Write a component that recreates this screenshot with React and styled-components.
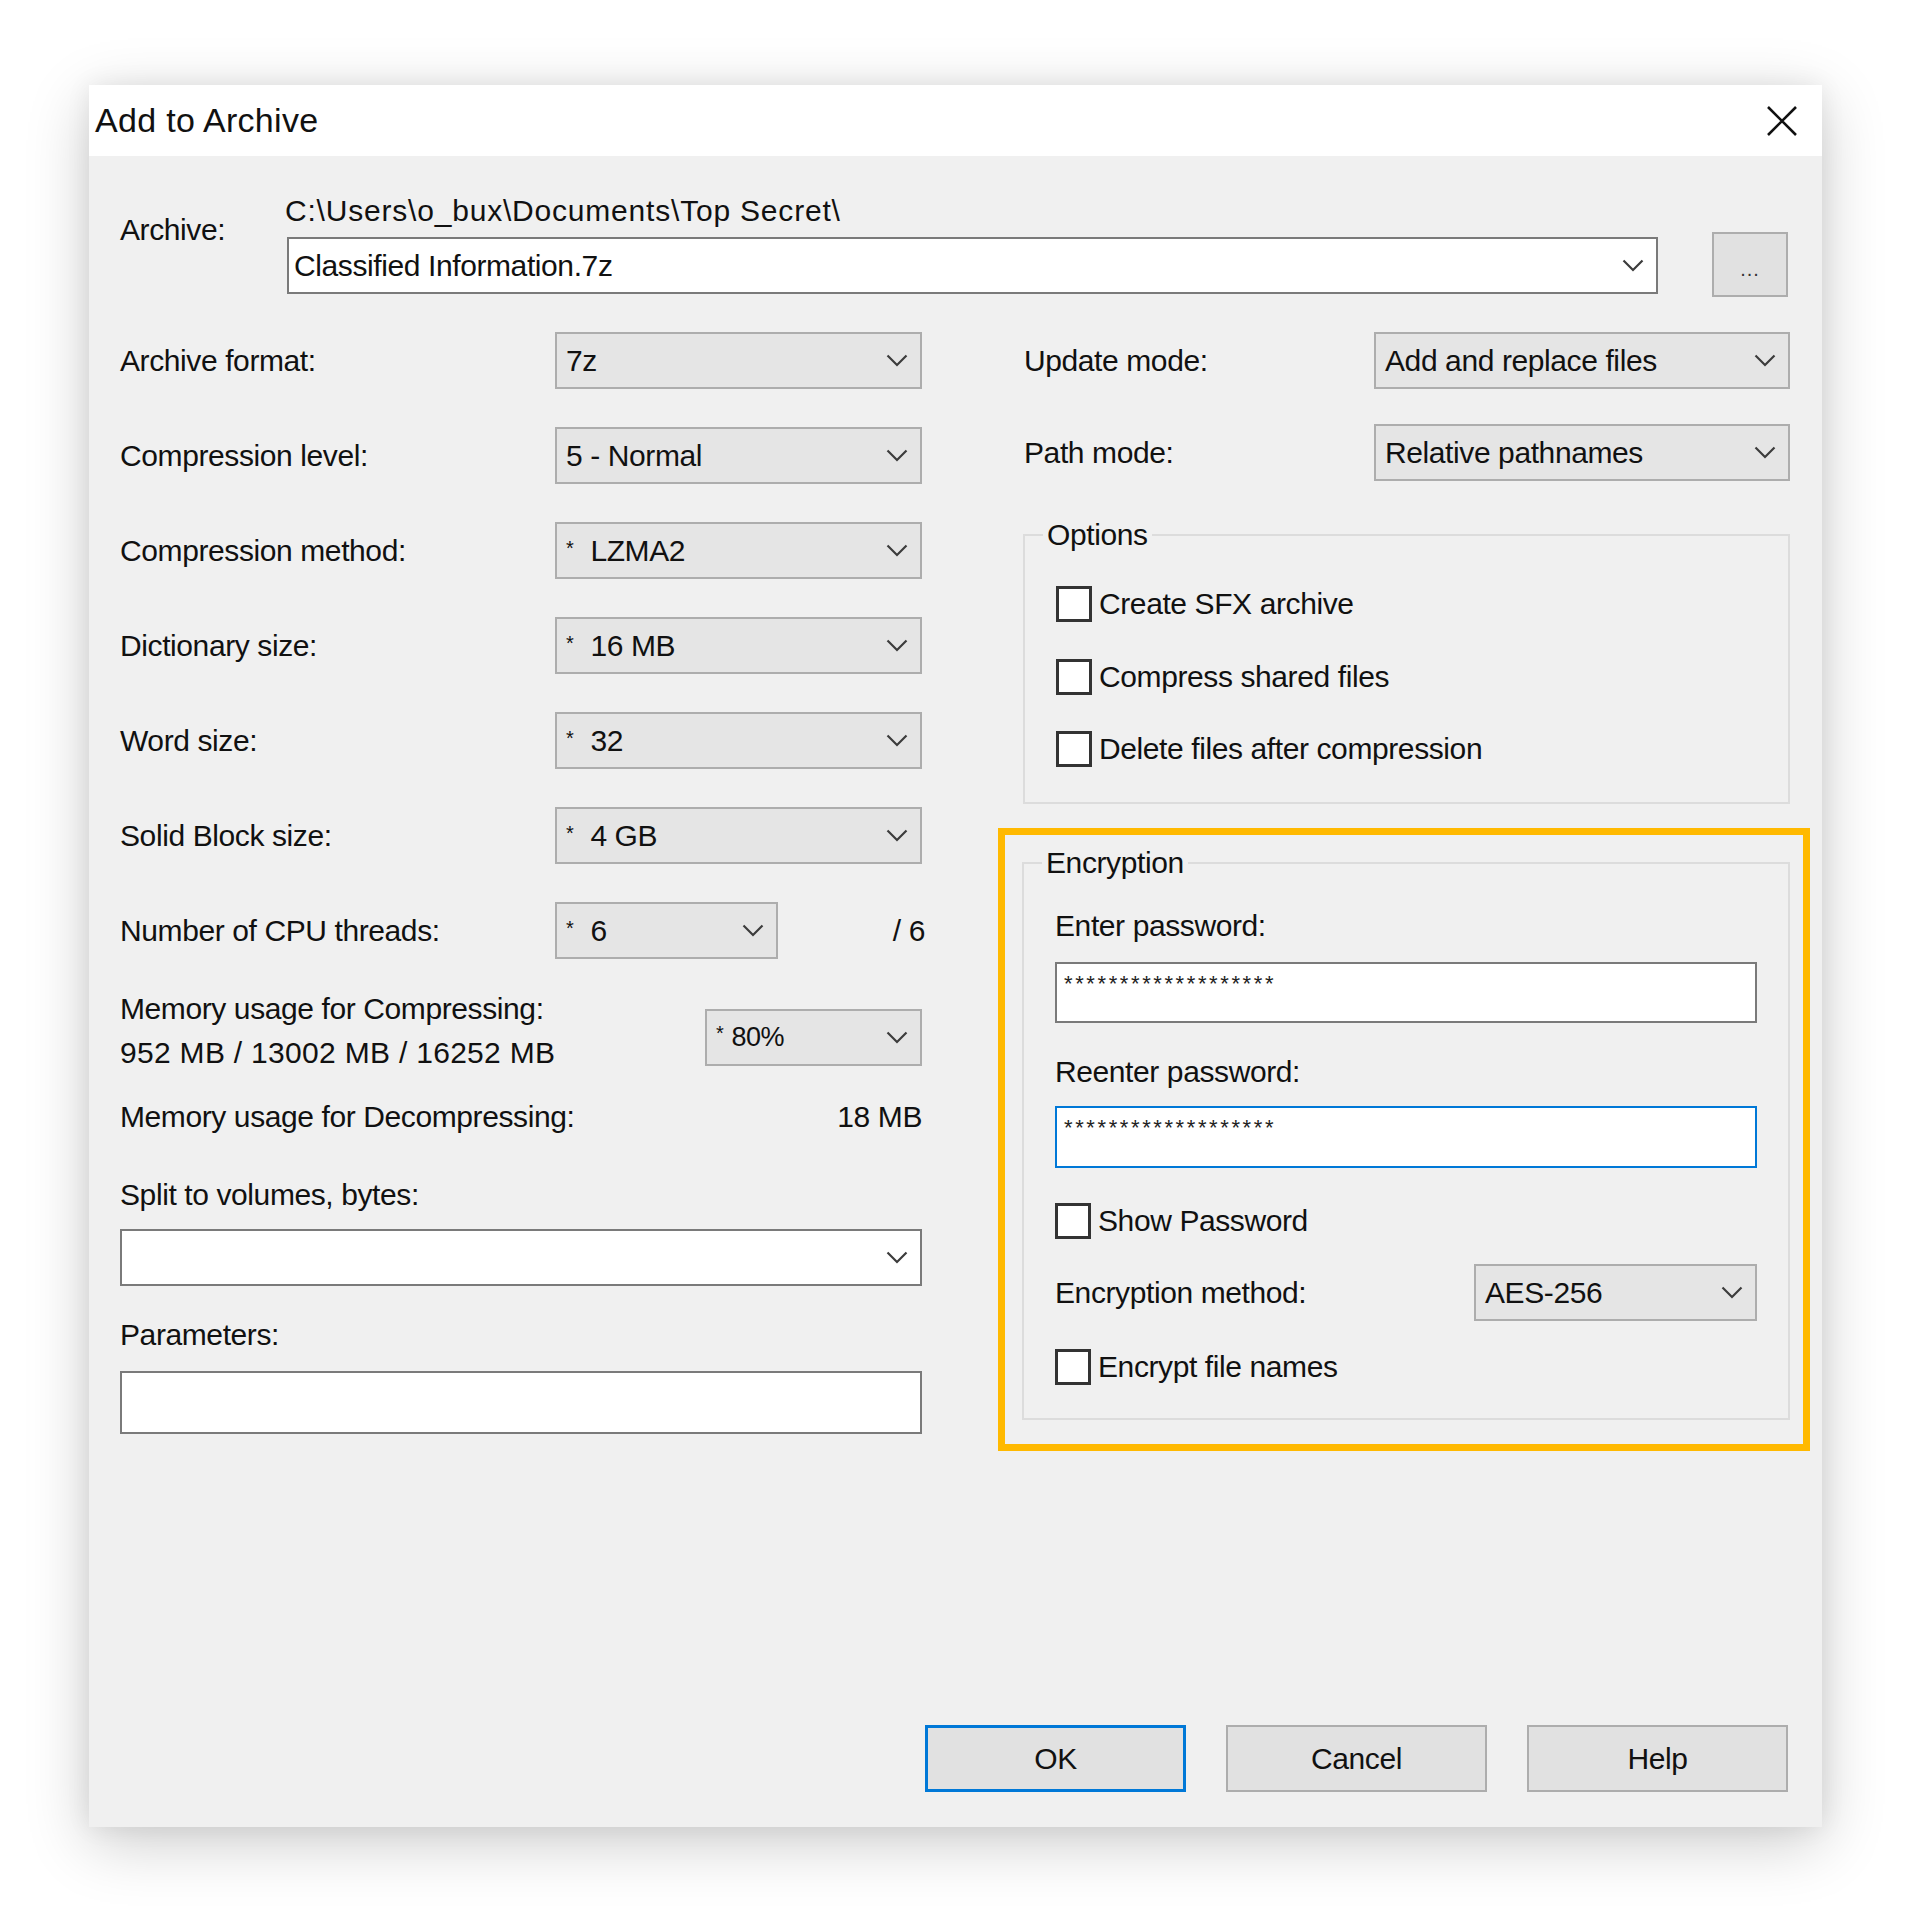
import React from 'react';
import styled, { createGlobalStyle } from 'styled-components';

const Global = createGlobalStyle`
  html, body { margin: 0; padding: 0; background: #ffffff; }
  body { font-family: "Liberation Sans", Arial, sans-serif; }
  *, *::before, *::after { box-sizing: border-box; }
`;

const Page = styled.div`
  width: 1920px;
  height: 1920px;
  padding: 85px 0 0 89px;
  background: #ffffff;
`;

const Dialog = styled.div`
  width: 1733px;
  height: 1742px;
  display: flex;
  flex-direction: column;
  background: #f0f0f0;
  box-shadow: 0 16px 60px rgba(0, 0, 0, 0.2), 0 0 24px rgba(0, 0, 0, 0.07);
  font-size: 30px;
  letter-spacing: -0.4px;
  color: #111;
`;

const TitleBar = styled.div`
  height: 71px;
  flex: none;
  background: #ffffff;
  display: flex;
  align-items: center;
  justify-content: space-between;
  padding: 0 24px 0 6px;
`;

const Title = styled.div`
  font-size: 34px;
  letter-spacing: 0.3px;
  color: #111;
`;

const Body = styled.div`
  flex: 1;
  display: flex;
  flex-direction: column;
  padding: 38px 32px 35px 31px;
`;

const ArchiveRow = styled.div`
  display: flex;
  align-items: flex-start;
`;

const ArchiveLabel = styled.div`
  width: 167px;
  margin-top: 19px;
  line-height: 34px;
`;

const ArchiveField = styled.div`
  width: 1371px;
  display: flex;
  flex-direction: column;
`;

const PathText = styled.div`
  line-height: 34px;
  margin-left: -2px;
  margin-bottom: 9px;
  letter-spacing: 0.8px;
`;

const Combo = styled.div`
  height: ${(p) => p.$h || 57}px;
  width: ${(p) => (p.$w ? `${p.$w}px` : '100%')};
  display: flex;
  align-items: center;
  justify-content: space-between;
  padding: 0 12px 0 ${(p) => p.$pl || 9}px;
  background: ${(p) => (p.$white ? '#ffffff' : '#e5e5e5')};
  border: 2px solid ${(p) => (p.$white ? '#7a7a7a' : '#adadad')};
  font-size: ${(p) => p.$fs || 30}px;
  flex: none;
`;

const BrowseButton = styled.div`
  width: 76px;
  height: 65px;
  margin: 38px 0 0 54px;
  background: #e1e1e1;
  border: 2px solid #adadad;
  display: flex;
  align-items: flex-end;
  justify-content: center;
  padding-bottom: 14px;
  font-size: 20px;
  letter-spacing: 1px;
  color: #333;
`;

const Columns = styled.div`
  margin-top: 35px;
  display: grid;
  grid-template-columns: 802px 766px;
  column-gap: 102px;
  align-items: start;
`;

const Column = styled.div`
  display: flex;
  flex-direction: column;
`;

const FieldRow = styled.div`
  display: flex;
  align-items: center;
  height: 57px;
  margin-top: ${(p) => p.$mt || 0}px;
`;

const Label = styled.div`
  width: ${(p) => (p.$w ? `${p.$w}px` : 'auto')};
  flex: ${(p) => (p.$w ? 'none' : '1')};
  line-height: 34px;
  white-space: nowrap;
`;

const Suffix = styled.div`
  flex: 1;
  text-align: right;
  margin-right: -3px;
`;

const Star = styled.span`
  font-size: 20px;
  position: relative;
  top: -6px;
  margin-right: ${(p) => p.$gap || 17}px;
`;

const MemRow = styled.div`
  margin-top: 28px;
  display: flex;
  justify-content: space-between;
  align-items: flex-start;
`;

const MemText = styled.div`
  line-height: 44px;
`;

const Digits = styled.span`
  letter-spacing: 0.3px;
`;

const MemSelect = styled.div`
  margin-top: 22px;
`;

const LineRow = styled.div`
  margin-top: ${(p) => p.$mt || 0}px;
  display: flex;
  justify-content: space-between;
  line-height: 44px;
`;

const TextBox = styled.div`
  height: ${(p) => p.$h || 62}px;
  margin-top: ${(p) => p.$mt || 0}px;
  background: #ffffff;
  border: 2px solid ${(p) => (p.$focus ? '#0078d7' : '#7a7a7a')};
  padding: 9px 0 0 7px;
`;

const Masked = styled.div`
  font-size: 22px;
  line-height: 22px;
  letter-spacing: 2.6px;
  color: #222;
`;

const Group = styled.fieldset`
  margin: ${(p) => p.$mt || 0}px 0 0 -1px;
  padding: 0 31px ${(p) => p.$pb || 33}px;
  border: 2px solid #dcdcdc;
  min-width: 0;
  display: flex;
  flex-direction: column;
`;

const Legend = styled.legend`
  padding: 0 4px;
  margin-left: -13px;
  line-height: 34px;
`;

const CheckList = styled.div`
  display: flex;
  flex-direction: column;
  gap: 36.5px;
  margin-top: 34px;
`;

const CheckRow = styled.div`
  display: flex;
  align-items: center;
  height: 36px;
  margin-top: ${(p) => p.$mt || 0}px;
`;

const Box = styled.div`
  width: 36px;
  height: 36px;
  flex: none;
  background: #ffffff;
  border: 3px solid #333333;
`;

const CheckText = styled.div`
  margin-left: 7px;
  line-height: 34px;
  white-space: nowrap;
`;

const Highlight = styled.div`
  margin: 24px -20px 0 -26px;
  border: 7px solid #ffb900;
  padding: 11px 13px 24px 18px;
`;

const FieldLabel = styled.div`
  line-height: 34px;
  margin-top: ${(p) => p.$mt || 0}px;
`;

const ButtonRow = styled.div`
  margin-top: auto;
  margin-right: 2px;
  display: flex;
  justify-content: flex-end;
  gap: 40px;
`;

const Button = styled.div`
  width: 261px;
  height: 67px;
  display: flex;
  align-items: center;
  justify-content: center;
  background: #e1e1e1;
  border: ${(p) => (p.$primary ? '3px solid #0078d7' : '2px solid #adadad')};
`;

const Chevron = () => (
  <svg width="22" height="13" viewBox="0 0 22 13" style={{ flex: 'none' }}>
    <polyline points="1.5,1.5 11,11 20.5,1.5" fill="none" stroke="#3c3c3c" strokeWidth="2.2" />
  </svg>
);

const CloseIcon = () => (
  <svg width="32" height="32" viewBox="0 0 32 32">
    <path d="M2 2 L30 30 M30 2 L2 30" stroke="#111" strokeWidth="2.6" fill="none" />
  </svg>
);

const Select = ({ w, white, fs, children }) => (
  <Combo $w={w} $white={white} $fs={fs}>
    <span>{children}</span>
    <Chevron />
  </Combo>
);

const Check = ({ label, mt }) => (
  <CheckRow $mt={mt}>
    <Box />
    <CheckText>{label}</CheckText>
  </CheckRow>
);

export default function App() {
  const stars = '*******************';
  return (
    <Page>
      <Global />
      <Dialog>
        <TitleBar>
          <Title>Add to Archive</Title>
          <CloseIcon />
        </TitleBar>
        <Body>
          <ArchiveRow>
            <ArchiveLabel>Archive:</ArchiveLabel>
            <ArchiveField>
              <PathText>C:\Users\o_bux\Documents\Top Secret\</PathText>
              <Combo $white $pl={5}>
                <span>Classified Information.7z</span>
                <Chevron />
              </Combo>
            </ArchiveField>
            <BrowseButton>...</BrowseButton>
          </ArchiveRow>

          <Columns>
            <Column>
              <FieldRow>
                <Label $w={435}>Archive format:</Label>
                <Select w={367}>7z</Select>
              </FieldRow>
              <FieldRow $mt={38}>
                <Label $w={435}>Compression level:</Label>
                <Select w={367}>5 - Normal</Select>
              </FieldRow>
              <FieldRow $mt={38}>
                <Label $w={435}>Compression method:</Label>
                <Select w={367}><Star>*</Star>LZMA2</Select>
              </FieldRow>
              <FieldRow $mt={38}>
                <Label $w={435}>Dictionary size:</Label>
                <Select w={367}><Star>*</Star>16 MB</Select>
              </FieldRow>
              <FieldRow $mt={38}>
                <Label $w={435}>Word size:</Label>
                <Select w={367}><Star>*</Star>32</Select>
              </FieldRow>
              <FieldRow $mt={38}>
                <Label $w={435}>Solid Block size:</Label>
                <Select w={367}><Star>*</Star>4 GB</Select>
              </FieldRow>
              <FieldRow $mt={38}>
                <Label $w={435}>Number of CPU threads:</Label>
                <Select w={223}><Star>*</Star>6</Select>
                <Suffix>/ 6</Suffix>
              </FieldRow>
              <MemRow>
                <MemText>
                  Memory usage for Compressing:
                  <br />
                  <Digits>952 MB / 13002 MB / 16252 MB</Digits>
                </MemText>
                <MemSelect>
                  <Select w={217} fs={27}><Star $gap={8}>*</Star>80%</Select>
                </MemSelect>
              </MemRow>
              <LineRow $mt={20}>
                <span>Memory usage for Decompressing:</span>
                <span>18 MB</span>
              </LineRow>
              <LineRow $mt={34}>
                <span>Split to volumes, bytes:</span>
              </LineRow>
              <FieldRow $mt={12}>
                <Select white>{''}</Select>
              </FieldRow>
              <LineRow $mt={27}>
                <span>Parameters:</span>
              </LineRow>
              <TextBox $mt={14} $h={63} />
            </Column>

            <Column>
              <FieldRow>
                <Label>Update mode:</Label>
                <Select w={416}>Add and replace files</Select>
              </FieldRow>
              <FieldRow $mt={35}>
                <Label>Path mode:</Label>
                <Select w={416}>Relative pathnames</Select>
              </FieldRow>
              <Group $mt={37} $pb={35}>
                <Legend>Options</Legend>
                <CheckList>
                  <Check label="Create SFX archive" />
                  <Check label="Compress shared files" />
                  <Check label="Delete files after compression" />
                </CheckList>
              </Group>
              <Highlight>
                <Group $pb={33}>
                  <Legend>Encryption</Legend>
                  <FieldLabel $mt={29}>Enter password:</FieldLabel>
                  <TextBox $mt={19} $h={61}>
                    <Masked>{stars}</Masked>
                  </TextBox>
                  <FieldLabel $mt={32}>Reenter password:</FieldLabel>
                  <TextBox $mt={17} $h={62} $focus>
                    <Masked>{stars}</Masked>
                  </TextBox>
                  <Check label="Show Password" mt={35} />
                  <FieldRow $mt={25}>
                    <Label>Encryption method:</Label>
                    <Select w={283}>AES-256</Select>
                  </FieldRow>
                  <Check label="Encrypt file names" mt={28} />
                </Group>
              </Highlight>
            </Column>
          </Columns>

          <ButtonRow>
            <Button $primary>OK</Button>
            <Button>Cancel</Button>
            <Button>Help</Button>
          </ButtonRow>
        </Body>
      </Dialog>
    </Page>
  );
}
